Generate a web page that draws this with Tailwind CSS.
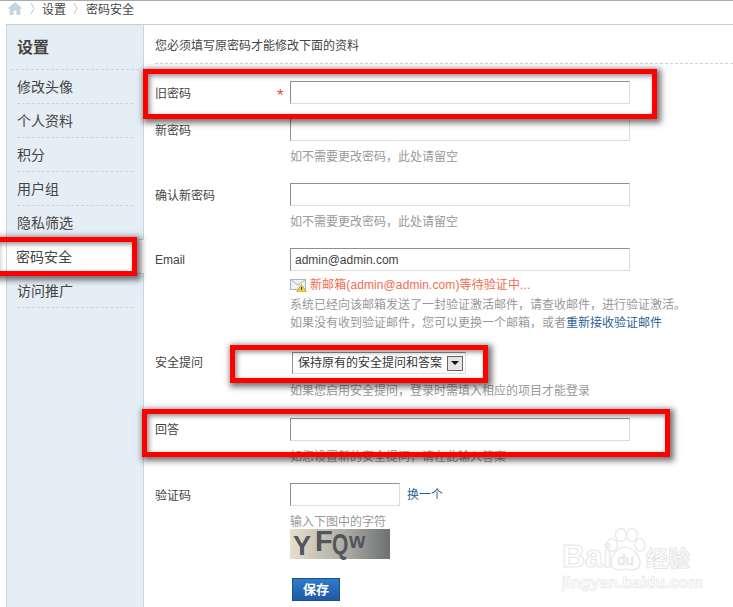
<!DOCTYPE html>
<html>
<head>
<meta charset="utf-8">
<script src="https://cdn.jsdelivr.net/npm/@tailwindcss/browser@4"></script>
</head>
<body class="bg-white">
<div class="relative w-[733px] h-[607px] overflow-hidden bg-white text-[12px] text-[#444] font-['Liberation_Sans','Noto_Sans_CJK_SC',sans-serif]">
  <div class="h-px bg-[#aaaaaa]"></div>
  <div class="h-[23px] pl-[7px] flex items-start pt-[1px] gap-[7px] leading-[16px] text-[#444]">
    <svg width="16" height="13" viewBox="0 0 15 13"><path d="M7.5 0 L15 6.5 H12.8 V13 H9 V8.5 H6 V13 H2.2 V6.5 H0 Z" fill="#c3d5e4"/></svg>
    <svg width="5" height="13" viewBox="0 0 5 13"><path d="M1 1 L4 6.5 L1 12" fill="none" stroke="#c4c4c4"/></svg>
    <span>设置</span>
    <svg width="5" height="13" viewBox="0 0 5 13"><path d="M1 1 L4 6.5 L1 12" fill="none" stroke="#c4c4c4"/></svg>
    <span class="ml-px">密码安全</span>
  </div>
  <div class="flex ml-[6px] h-[583px] border-t border-[#c9cdd0]">
    <aside class="w-[138px] shrink-0 bg-[#e5edf5] border-l border-r border-[#cdd5dc] text-[14px] leading-[35px] text-[#444]">
      <h2 class="h-[45px] border-b border-dashed border-[#cfd3d6] mx-[4px] px-[6px] text-[16px] font-bold leading-[46px]">设置</h2>
      <ul>
        <li class="h-[34px] mx-[10px] border-b border-dashed border-[#cfd3d6]">修改头像</li>
        <li class="h-[34px] mx-[10px] border-b border-dashed border-[#cfd3d6]">个人资料</li>
        <li class="h-[34px] mx-[10px] border-b border-dashed border-[#cfd3d6]">积分</li>
        <li class="h-[34px] mx-[10px] border-b border-dashed border-[#cfd3d6]">用户组</li>
        <li class="h-[34px] mx-[10px] border-b border-dashed border-[#cfd3d6]">隐私筛选</li>
        <li class="h-[35px] -mr-px -mt-px pl-[9px] bg-white border-y border-[#cdd5dc] leading-[34px]">密码安全</li>
        <li class="h-[34px] mx-[10px] border-b border-dashed border-[#cfd3d6]">访问推广</li>
      </ul>
    </aside>
    <main class="flex-1 pl-[11px]">
      <p class="h-[39px] border-b border-dashed border-[#cfd3d6] leading-[43px] text-[12px]">您必须填写原密码才能修改下面的资料</p>
      <div class="flex flex-col pt-[17px]">
        <div class="flex h-[37px]">
          <label class="w-[135px] leading-[27px] relative">旧密码<span class="absolute left-[122px] top-[6px] text-[#f8404c] text-[17px] leading-[17px]">*</span></label>
          <input class="w-[340px] h-[23px] border border-[#dddddd] border-t-[#8f8f8f] border-l-[#8f8f8f] bg-white" type="text">
        </div>
        <div class="flex h-[65px]">
          <label class="w-[135px] leading-[27px]">新密码</label>
          <div>
            <input class="block w-[340px] h-[23px] border border-[#dddddd] border-t-[#8f8f8f] border-l-[#8f8f8f] bg-white" type="text">
            <p class="mt-[6px] leading-[20px] text-[#999]">如不需要更改密码，此处请留空</p>
          </div>
        </div>
        <div class="flex h-[65px]">
          <label class="w-[135px] leading-[27px]">确认新密码</label>
          <div>
            <input class="block w-[340px] h-[23px] border border-[#dddddd] border-t-[#8f8f8f] border-l-[#8f8f8f] bg-white" type="text">
            <p class="mt-[6px] leading-[20px] text-[#999]">如不需要更改密码，此处请留空</p>
          </div>
        </div>
        <div class="flex h-[103px]">
          <label class="w-[135px] leading-[25px]">Email</label>
          <div>
            <input class="block w-[340px] h-[23px] px-[4px] border border-[#dddddd] border-t-[#8f8f8f] border-l-[#8f8f8f] bg-white text-[#444] text-[12px]" type="text" value="admin@admin.com">
            <p class="mt-[6px] leading-[16px] flex items-center gap-[3px] text-[#f26c4f]">
              <svg width="17" height="14" viewBox="0 0 17 14"><rect x="0.5" y="1.5" width="15" height="10" fill="#eef2f4" stroke="#aab4ba"/><path d="M1 2 L8 7 L15 2" fill="none" stroke="#aab4ba"/><path d="M11.5 6.5 L16.5 14 H6.5 Z" fill="#f2d43c" stroke="#a88a1a" stroke-width="0.6"/><rect x="11" y="9" width="1" height="3" fill="#333"/></svg>
              <span class="tracking-[0.1px]">新邮箱(admin@admin.com)等待验证中...</span>
            </p>
            <p class="leading-[20px] text-[#999] mt-[2px] h-[18px] whitespace-nowrap">系统已经向该邮箱发送了一封验证激活邮件，请查收邮件，进行验证激活。</p>
            <p class="leading-[20px] text-[#999] h-[18px] whitespace-nowrap">如果没有收到验证邮件，您可以更换一个邮箱，或者<a class="text-[#2b5f95]">重新接收验证邮件</a></p>
          </div>
        </div>
        <div class="flex h-[67px]">
          <label class="w-[135px] leading-[25px]">安全提问</label>
          <div>
            <div class="w-[174px] h-[22px] ml-[2px] mt-px border border-[#dddddd] border-t-[#8f8f8f] border-l-[#8f8f8f] flex items-center pl-[5px] justify-between pr-[2px] text-[#333]">
              <span>保持原有的安全提问和答案</span>
              <span class="w-[16px] h-[15px] bg-[#e4e4e4] border border-[#666] flex items-center justify-center">
                <svg width="8" height="4" viewBox="0 0 8 4"><path d="M0 0 H8 L4 4 Z" fill="#111"/></svg>
              </span>
            </div>
            <p class="mt-[7px] leading-[20px] text-[#999]">如果您启用安全提问，登录时需填入相应的项目才能登录</p>
          </div>
        </div>
        <div class="flex h-[65px]">
          <label class="w-[135px] leading-[25px]">回答</label>
          <div>
            <input class="block w-[340px] h-[23px] border border-[#dddddd] border-t-[#8f8f8f] border-l-[#8f8f8f] bg-white" type="text">
            <p class="mt-[6px] leading-[20px] text-[#999]">如您设置新的安全提问，请在此输入答案</p>
          </div>
        </div>
        <div class="flex">
          <label class="w-[135px] leading-[27px]">验证码</label>
          <div>
            <div class="flex items-center gap-[7px]">
              <input class="block w-[110px] h-[23px] border border-[#dddddd] border-t-[#8f8f8f] border-l-[#8f8f8f] bg-white" type="text">
              <a class="text-[#2b5f95]">换一个</a>
            </div>
            <p class="mt-[6px] h-[18px] leading-[20px] text-[#999]">输入下图中的字符</p>
            <div class="w-[100px] h-[30px] mt-[-1px] pl-[3px] flex items-start bg-gradient-to-r from-[#e8dfce] via-[#a8a69e] via-60% to-[#6c7074] text-[#50565a] font-['Liberation_Sans',sans-serif] font-bold leading-[24px]">
              <span class="text-[27px] mt-[5px] w-[22px]">Y</span><span class="text-[29px] mt-[0px] w-[17px]">F</span><span class="text-[30px] mt-[3px] w-[17px] origin-left scale-x-[0.7]">Q</span><span class="text-[22px] mt-[0px] origin-left scale-x-[0.95]">w</span>
            </div>
            <button class="block mt-[19px] ml-[2px] w-[48px] h-[23px] bg-gradient-to-b from-[#2f7cc8] to-[#1f5aa6] border border-[#1d4f8f] text-white font-bold text-[13px] leading-[20px]">保存</button>
          </div>
        </div>
      </div>
    </main>
  </div>

  <!-- annotation rectangles drawn on top of the screenshot -->
  <div class="absolute left-[143px] top-[69px] w-[514px] h-[50px] border-[5px] border-[#ff0000] shadow-[2px_2px_6px_2px_rgba(0,0,0,0.55),inset_2px_2px_5px_rgba(0,0,0,0.45)]"></div>
  <div class="absolute left-[-8px] top-[237px] w-[145px] h-[39px] border-[5px] border-[#ff0000] shadow-[2px_2px_6px_2px_rgba(0,0,0,0.55),inset_2px_2px_5px_rgba(0,0,0,0.45)]"></div>
  <div class="absolute left-[230px] top-[345px] w-[258px] h-[38px] border-[5px] border-[#ff0000] shadow-[2px_2px_6px_2px_rgba(0,0,0,0.55),inset_2px_2px_5px_rgba(0,0,0,0.45)]"></div>
  <div class="absolute left-[142px] top-[409px] w-[528px] h-[48px] border-[5px] border-[#ff0000] shadow-[2px_2px_6px_2px_rgba(0,0,0,0.55),inset_2px_2px_5px_rgba(0,0,0,0.45)]"></div>

  <!-- watermark -->
  <div class="absolute left-[562px] top-[528px] w-[135px] text-white font-['Liberation_Sans','Noto_Sans_CJK_SC',sans-serif]">
    <div class="flex items-end h-[43px]">
      <span class="w-[43px] text-[32px] font-bold leading-[30px] [-webkit-text-stroke:1px_#e6e6e6]">Bai</span>
      <svg width="41" height="43" viewBox="0 0 41 43" class="shrink-0" fill="none" stroke="#e6e6e6" stroke-width="1.2"><ellipse cx="7" cy="17" rx="5.5" ry="6.5"/><ellipse cx="16" cy="7" rx="5.5" ry="6.5"/><ellipse cx="27" cy="7" rx="5.5" ry="6.5"/><ellipse cx="35" cy="17" rx="5" ry="6.5"/><path d="M20 19 C13 19 6 28 6 34 C6 42 14 43 20 41 C27 43 36 42 35 33 C34 27 27 19 20 19Z"/><text x="20.5" y="37" font-size="15" text-anchor="middle" fill="#fff" stroke="#e0e0e0" stroke-width="0.7" font-family="Liberation Sans">du</text></svg>
      <span class="text-[22px] font-bold leading-[24px] whitespace-nowrap [-webkit-text-stroke:1px_#e6e6e6]">经验</span>
    </div>
    <div class="text-[16px] font-bold leading-[18px] mt-[3px] whitespace-nowrap [-webkit-text-stroke:0.7px_#e6e6e6]">jingyan.baidu.com</div>
  </div>
</div>
</body>
</html>
